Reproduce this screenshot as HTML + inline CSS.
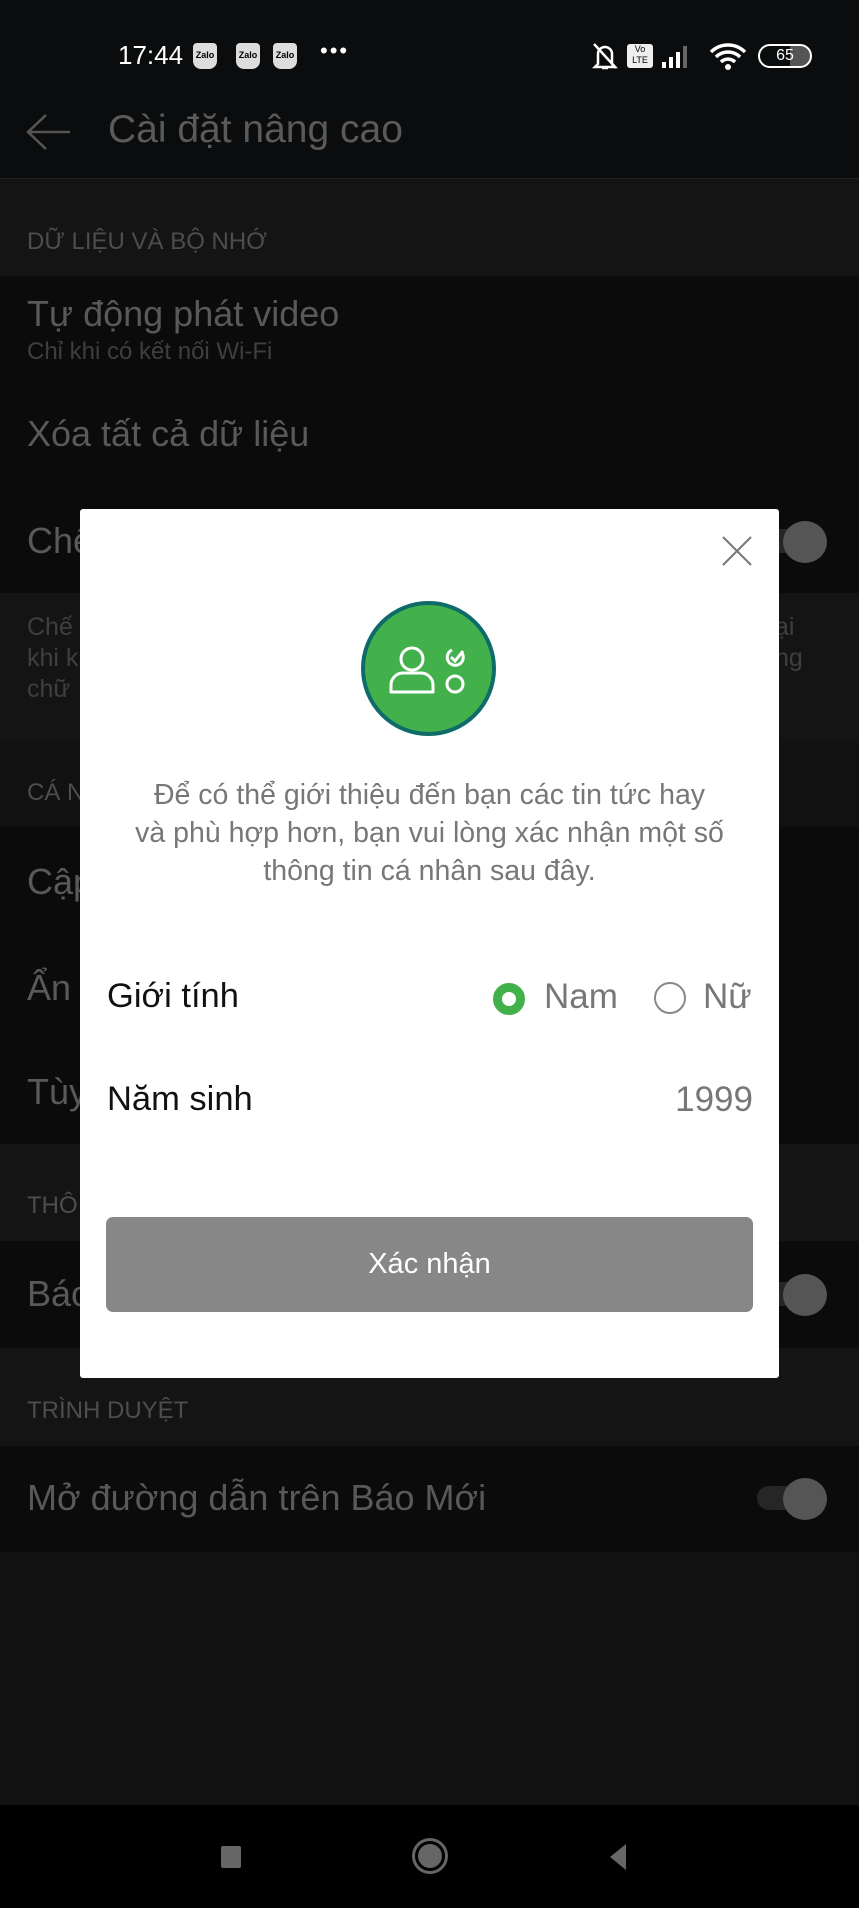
<!DOCTYPE html>
<html><head><meta charset="utf-8"><style>
*{margin:0;padding:0;box-sizing:border-box}
body{width:859px;height:1908px;background:#111;font-family:"Liberation Sans",sans-serif;position:relative;overflow:hidden}
.a{position:absolute}
.t{color:#595959;font-size:36px;left:27px;position:absolute;white-space:nowrap}
.h{color:#4d4d4d;font-size:24px;left:27px;position:absolute}
.band{position:absolute;left:0;width:859px;background:#141414}
.item{position:absolute;left:0;width:859px;background:#0b0b0b}
.tg{position:absolute;left:757px;width:70px;height:40px}
.tg i{position:absolute;left:0;top:8px;width:55px;height:24px;border-radius:12px;background:#262626}
.tg b{position:absolute;right:0;top:0;width:44px;height:42px;border-radius:50%;background:#555}
.z{position:absolute;top:43px;width:24px;height:26px;background:#ddd;border-radius:4px 4px 8px 8px;font-size:9px;color:#000;text-align:center;line-height:24px;font-weight:bold}
</style></head><body>
<div class="a" style="left:0;top:0;width:859px;height:179px;background:#0a0c0d"></div>
<div class="a" style="left:0;top:178px;width:859px;height:1px;background:#222"></div>
<div class="a" style="left:118px;top:40px;color:#fff;font-size:26px">17:44</div>
<div class="z" style="left:193px">Zalo</div>
<div class="z" style="left:236px">Zalo</div>
<div class="z" style="left:273px">Zalo</div>
<div class="a" style="left:320px;top:38px;color:#fff;font-size:22px;letter-spacing:2px">•••</div>
<div class="a" style="left:627px;top:44px;width:26px;height:24px;background:#eee;border-radius:3px;font-size:9px;color:#000;text-align:center;line-height:11px">Vo<br>LTE</div>
<svg class="a" style="left:590px;top:40px" width="30" height="32" viewBox="0 0 30 32"><path d="M8 24V14a7 7 0 0 1 14 0v10l3 3H5z M12 28h6 M4 4l22 24" stroke="#fff" stroke-width="2.5" fill="none"/></svg>
<svg class="a" style="left:660px;top:42px" width="40" height="28"><rect x="2" y="20" width="4" height="6" fill="#fff"/><rect x="9" y="15" width="4" height="11" fill="#fff"/><rect x="16" y="10" width="4" height="16" fill="#fff"/><rect x="23" y="4" width="4" height="22" fill="#666"/></svg>
<svg class="a" style="left:708px;top:40px" width="40" height="32" viewBox="0 0 40 32"><path d="M3 12a24 24 0 0 1 34 0M8 17a17 17 0 0 1 24 0M13 22a10 10 0 0 1 14 0" stroke="#fff" stroke-width="3.5" fill="none"/><circle cx="20" cy="27" r="3" fill="#fff"/></svg>
<div class="a" style="left:758px;top:44px;width:54px;height:24px;border:2px solid #fff;border-radius:12px;color:#fff;font-size:16px;text-align:center;line-height:20px;background:linear-gradient(90deg,#0a0c0d 60%,#555 60%)">65</div>
<svg class="a" style="left:24px;top:112px" width="50" height="40"><path d="M46 20H4M22 3L4 20l18 17" stroke="#555" stroke-width="2.5" fill="none"/></svg>
<div class="a" style="left:108px;top:108px;color:#5a5a5a;font-size:39px">Cài đặt nâng cao</div>

<div class="band" style="top:179px;height:97px"></div>
<div class="h" style="top:228px">DỮ LIỆU VÀ BỘ NHỚ</div>
<div class="item" style="top:276px;height:317px"></div>
<div class="t" style="top:293px">Tự động phát video</div>
<div class="a" style="left:27px;top:338px;color:#3f3f3f;font-size:24px">Chỉ khi có kết nối Wi-Fi</div>
<div class="t" style="top:413px">Xóa tất cả dữ liệu</div>
<div class="t" style="top:520px">Chế</div>
<div class="tg" style="top:521px"><i></i><b></b></div>
<div class="band" style="top:593px;height:149px"></div>
<div class="a" style="left:27px;top:612px;color:#3f3f3f;font-size:25px;line-height:31px">Chế<br>khi k<br>chữ</div>
<div class="a" style="left:775px;top:612px;color:#3f3f3f;font-size:25px;line-height:31px">ại<br>ng</div>
<div class="h" style="top:779px">CÁ N</div>
<div class="item" style="top:827px;height:317px"></div>
<div class="t" style="top:861px">Cập</div>
<div class="t" style="top:967px">Ẩn</div>
<div class="t" style="top:1071px">Tùy</div>
<div class="band" style="top:1144px;height:97px"></div>
<div class="h" style="top:1192px">THÔ</div>
<div class="item" style="top:1241px;height:107px"></div>
<div class="t" style="top:1273px">Báo</div>
<div class="tg" style="top:1274px"><i></i><b></b></div>
<div class="band" style="top:1348px;height:98px"></div>
<div class="h" style="top:1397px">TRÌNH DUYỆT</div>
<div class="item" style="top:1446px;height:106px"></div>
<div class="t" style="top:1477px">Mở đường dẫn trên Báo Mới</div>
<div class="tg" style="top:1478px"><i></i><b></b></div>

<div class="a" style="left:0;top:1805px;width:859px;height:103px;background:#000"></div>
<div class="a" style="left:221px;top:1846px;width:20px;height:22px;background:#666;border-radius:2px"></div>
<div class="a" style="left:412px;top:1838px;width:36px;height:36px;border:3px solid #666;border-radius:50%"><div style="margin:3px;width:24px;height:24px;border-radius:50%;background:#666"></div></div>
<svg class="a" style="left:608px;top:1843px" width="20" height="28"><path d="M18 1L2 14l16 13z" fill="#666"/></svg>

<div class="a" style="left:80px;top:509px;width:699px;height:869px;background:#fff;border-radius:3px"></div>
<svg class="a" style="left:722px;top:536px" width="30" height="30"><path d="M1 1l28 28M29 1L1 29" stroke="#777" stroke-width="2"/></svg>
<div class="a" style="left:361px;top:601px;width:135px;height:135px;border-radius:50%;background:#43b14b;border:4px solid #0f6b6a"></div>
<svg class="a" style="left:386px;top:638px" width="86" height="62" viewBox="0 0 86 62"><circle cx="26" cy="21" r="11" stroke="#fff" stroke-width="3" fill="none"/><path d="M5 54v-7a12 12 0 0 1 12-12h18a12 12 0 0 1 12 12v7z" stroke="#fff" stroke-width="3" fill="none" stroke-linejoin="round"/><circle cx="69" cy="46" r="8" stroke="#fff" stroke-width="3" fill="none"/><path d="M66 12a8 8 0 1 0 10 3" stroke="#fff" stroke-width="3" fill="none"/><path d="M65 19l4 4 8-10" stroke="#fff" stroke-width="3" fill="none"/></svg>
<div class="a" style="left:80px;top:776px;width:699px;text-align:center;color:#777;font-size:28.5px;line-height:38px">Để có thể giới thiệu đến bạn các tin tức hay<br>và phù hợp hơn, bạn vui lòng xác nhận một số<br>thông tin cá nhân sau đây.</div>
<div class="a" style="left:107px;top:977px;color:#111;font-size:34.5px">Giới tính</div>
<div class="a" style="left:493px;top:983px;width:32px;height:32px;border-radius:50%;border:9px solid #43b14b"></div>
<div class="a" style="left:544px;top:977px;color:#777;font-size:35px">Nam</div>
<div class="a" style="left:654px;top:982px;width:32px;height:32px;border-radius:50%;border:2px solid #888"></div>
<div class="a" style="left:703px;top:977px;color:#777;font-size:35px">Nữ</div>
<div class="a" style="left:107px;top:1080px;color:#111;font-size:34.5px">Năm sinh</div>
<div class="a" style="left:640px;top:1080px;width:113px;text-align:right;color:#777;font-size:35px">1999</div>
<div class="a" style="left:106px;top:1217px;width:647px;height:95px;background:#878787;border-radius:7px;color:#fff;font-size:29px;text-align:center;line-height:95px">Xác nhận</div>
</body></html>
